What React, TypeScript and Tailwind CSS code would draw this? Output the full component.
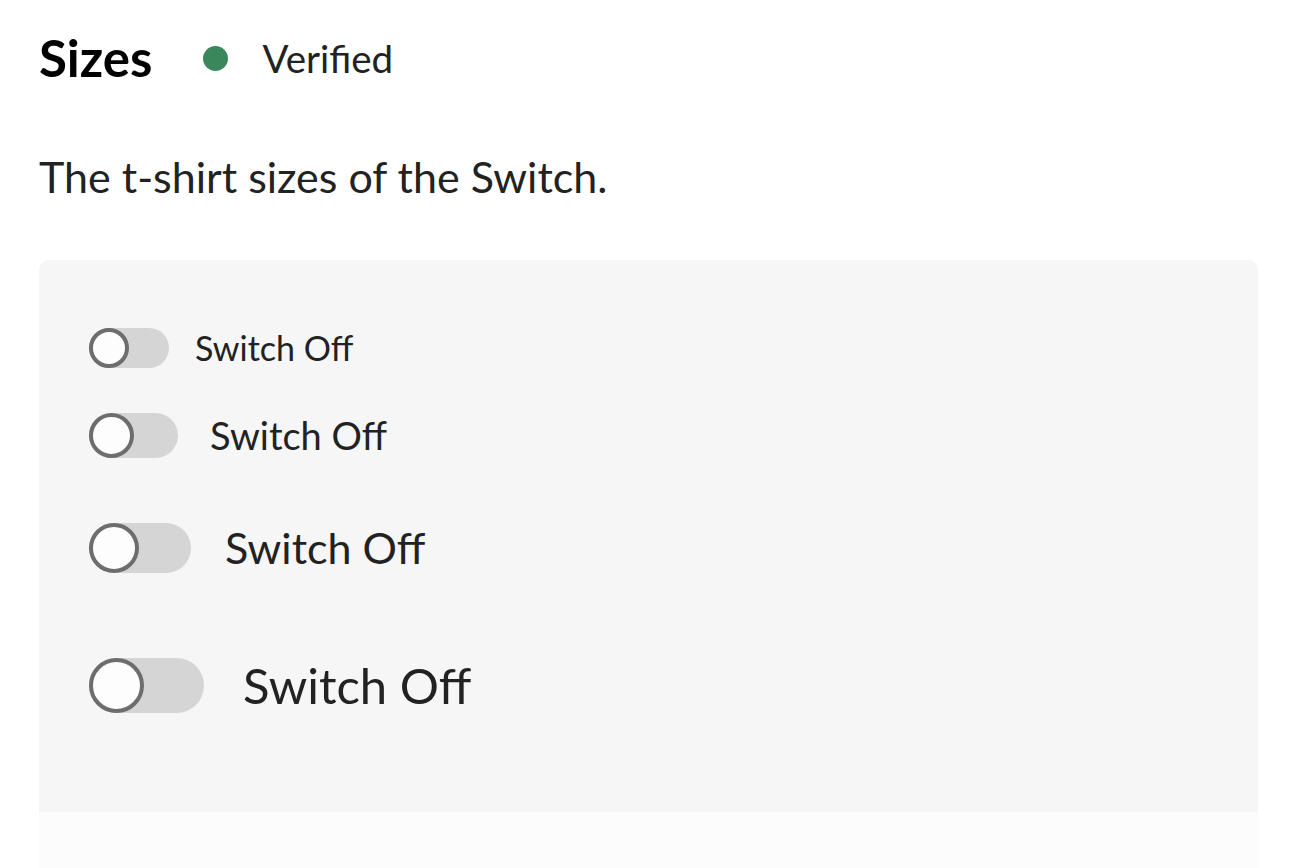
const FONT = "font-['Lato','Liberation_Sans',sans-serif]";

const SIZES = [
  { key: "s", row: "h-[75px]", track: "w-[80px] h-[40px]", knob: "w-[40px] h-[40px]", gap: "ml-[26px]", text: "text-[34px]" },
  { key: "m", row: "h-[100px]", track: "w-[89px] h-[45px]", knob: "w-[45px] h-[45px]", gap: "ml-[32px]", text: "text-[38px]" },
  { key: "l", row: "h-[125px]", track: "w-[102px] h-[50px]", knob: "w-[50px] h-[50px]", gap: "ml-[34px]", text: "text-[43px]" },
  { key: "xl", row: "h-[150px]", track: "w-[115px] h-[55px]", knob: "w-[55px] h-[55px]", gap: "ml-[39px]", text: "text-[49px]" },
];

function Switch({ size }: { size: (typeof SIZES)[number] }) {
  return (
    <label className={`flex items-center ${size.row}`}>
      <span className={`flex items-center rounded-full bg-[#d5d5d5] ${size.track}`}>
        <span className={`rounded-full border-[4px] border-[#6d6d6d] bg-[#fdfdfd] ${size.knob}`} />
      </span>
      <span className={`text-[#222222] leading-none ${size.gap} ${size.text}`}>Switch Off</span>
    </label>
  );
}

export default function App() {
  return (
    <div className={`min-h-[868px] bg-white pl-[39px] pr-[32px] ${FONT}`}>
      <div className="flex items-center pt-[28px] h-[88px]">
        <h2 className="text-[51px] font-bold leading-[60px] text-black">Sizes</h2>
        <span className="ml-[51px] w-[25px] h-[25px] rounded-full bg-[#3a875c]" />
        <span className="ml-[34px] text-[38.5px] leading-[60px] text-[#222222]">Verified</span>
      </div>
      <p className="mt-[59px] text-[43px] leading-[60px] text-[#222222]">The t-shirt sizes of the Switch.</p>
      <div className="mt-[53px] h-[552px] rounded-t-[10px] bg-[#f6f6f6] px-[50px] py-[50px]">
        {SIZES.map((s) => (
          <Switch key={s.key} size={s} />
        ))}
      </div>
      <div className="h-[60px] bg-[#fcfcfc]" />
    </div>
  );
}
